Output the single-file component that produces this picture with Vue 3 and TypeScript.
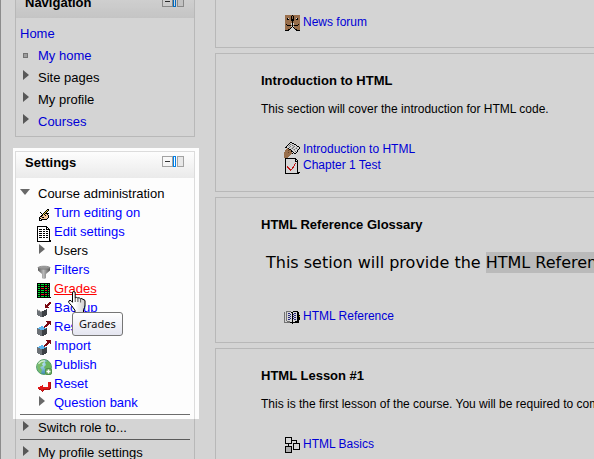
<script setup lang="ts">
import { defineComponent, h } from 'vue'

// One character per pixel; "." is transparent.
const palette: Record<string, string> = {
  k: '#000000', w: '#ffffff', b: '#b5835a', t: '#f3c799', y: '#e8d040', g: '#00e030',
  r: '#e01818', d: '#7c0a12', s: '#888888', l: '#cfcfcf', c: '#5ab4ee', n: '#3d4145',
  m: '#6c7176', a: '#b9b9b9', u: '#303098', o: '#7a5030', e: '#b01010',
}

const bitmaps: Record<string, string[]> = {
  forum: [
    '.bbbbbbbkbbbbbbb',
    '.bbbbbbkbkbbbbbb',
    '.bbbbbbkbkbbbbbb',
    '.bbkwbbkbkbbwkbb',
    '.bbkkbbkkkbbkkbb',
    '.bbbbbbkkkbbbbbb',
    '.bbbbbbbkbbbbbbb',
    '.bbbbbbbkbbbbbbb',
    '.bbbbbbwkwbbbbbb',
    '.bkbbbbwkwbbbbkb',
    '.bbkkkkbkbkkkkbb',
    '.bbbbbbwkwbbbbbb',
    '.bbbbbbk.kbbbbbb',
    '.bbbbbk...kbbbbb',
    '.bbbkk.....kkbbb',
    '.kkkk.......kkkk',
  ],
  page: [
    '......kk........',
    '.....kwwkk......',
    '....kwslwwkk....',
    '...kwswwslwwk...',
    '..kwlwswwlswwkk.',
    '.kkwwswwlswwlwwk',
    '...bkwwlswwlswwk',
    '..bbbkkwwlswwlk.',
    '.bbbobbkwwlwwk..',
    '.bbbbbbkkwwswk..',
    'bbbbobbb.kwwk...',
    'bbbbbbbbk.kk....',
    'bbbbbbb.........',
    'bbbbbb..........',
    'bbbbb...........',
    'bbbb............',
  ],
  quiz: [
    '.kkkkkkkkkkk....',
    '.kwwwwwwwwwkk...',
    '.kwwwwwwwwwkwk..',
    '.kwwwwwwwwwkkk..',
    '.kwwwwwwwwwwwk..',
    '.kwwwwwwwwwrwk..',
    '.kwwwwwwwwrwwk..',
    '.kwwwwwwwwrwwk..',
    '.kwrwwwwwrwwwk..',
    '.kwrrwwwrrwwwk..',
    '.kwwrrwwrwwwwk..',
    '.kwwwrrrwwwwwk..',
    '.kwwwwrwwwwwwk..',
    '.kwwwwwwwwwwwk..',
    '.kwwwwwwwwwwwkkk',
    '.kkkkkkkkkkkkkk.',
  ],
  glossary: [
    '................',
    '................',
    '..sssss..kkkkk..',
    's.swwwwkkwwwwkk.',
    's.swuuwwkwuuwkk.',
    's.swwwuwkuwwwkk.',
    's.swuuwwkwuuwkkk',
    's.swwwuwkuwwwkky',
    's.swuuwwkwuuwkkk',
    's.swwwuwkuwwwkkk',
    's.swuuwwkwuuwkkk',
    's.swwwwwkwwwwkk.',
    's..ssswwkwwkkkk.',
    'sssssskkkkkkkkk.',
    '........k.......',
    '................',
  ],
  lesson: [
    '.kkkkkkk........',
    '.kwwwwwk........',
    '.kwwwwwk........',
    '.kwwwwwkkkkkk...',
    '.kwwwwwk....k...',
    '.kwwwwwk....k...',
    '.kkkkkkk.kkkkkkk',
    '....k....kwwwwwk',
    '....k....kwwwwwk',
    '.kkkkkkk.kwwwwwk',
    '.klllllk.kwwwwwk',
    '.klllllk.kwwwwwk',
    '.klllllk.kkkkkkk',
    '.klllllk........',
    '.klllllk........',
    '.kkkkkkk........',
  ],
  edit: [
    '................',
    '................',
    '...........kk...',
    '..........kyk...',
    '.........kyk....',
    '....k...kyk.....',
    '.....k.kykkkk...',
    '......kykttk....',
    '.....kkttkttk...',
    '....kkttttttk...',
    '...kttkkttttk...',
    '...kkttttttk....',
    '...k.kkkkkk.....',
    '...kkk..........',
    '................',
    '................',
  ],
  document: [
    '.kkkkkkkkkk.....',
    '.kwwwwwwwwkk....',
    '.kwwwwwwwwkwk...',
    '.kwkkkwkkwkkkk..',
    '.kwwwwwwwwwwwk..',
    '.kwkkkwkkwkkwk..',
    '.kwwwwwwwwwwwk..',
    '.kwkkkwkkwkkwk..',
    '.kwwwwwwwwwwwk..',
    '.kwkkkwkkwkkwk..',
    '.kwwwwwwwwwwwk..',
    '.kwkkkwkkwkkwk..',
    '.kwwwwwwwwwwwk..',
    '.kwwwwwwwwwwwk..',
    '.kwwwwwwwwwwwkk.',
    '.kkkkkkkkkkkkkk.',
  ],
  grades: [
    '.kkkkkkkkkkkkk..',
    '.kggkgggkggkgk..',
    '.kkkkkkkkkkkkk..',
    '.kggkgggkrrkgk..',
    '.kkkkkkkkkkkkk..',
    '.kggkrrrkggkrk..',
    '.kkkkkkkkkkkkk..',
    '.kggkgggkrrkgk..',
    '.kkkkkkkkkkkkk..',
    '.kggkgggkggkgk..',
    '.kkkkkkkkkkkkk..',
    '.kggkrrrkrrkgk..',
    '.kkkkkkkkkkkkk..',
    '.kggkgggkggkgk..',
    '.kkkkkkkkkkkkkk.',
    '................',
  ],
  backup: [
    '.............dd.',
    '............ddd.',
    '.........d.ddd..',
    '.........dddd...',
    '.........ddd....',
    '.....ww..dddd...',
    '...wwwwww.......',
    '.awwwwwwwwn.....',
    '.maawwwwnnn.....',
    '.mmmaannnnn.....',
    '.mmmmmnnnnn.....',
    '.mmmmmnnnnn.....',
    '.mmmmmnnnnn.....',
    '..mmmmnnnn......',
    '....mmnn........',
    '................',
  ],
  restore: [
    '..........ddddd.',
    '...........dddd.',
    '...........dddd.',
    '..........ddd.d.',
    '.........ddd....',
    '.....cc.ddd.....',
    '...cccccd.......',
    '.mccccccccn.....',
    '.mmmccccnnn.....',
    '.mmmmmnnnnn.....',
    '.mmmmmnnnnn.....',
    '.mmmmmnnnnn.....',
    '.mmmmmnnnnn.....',
    '..mmmmnnnn......',
    '....mmnn........',
    '................',
  ],
  reset: [
    '................',
    '................',
    '................',
    '................',
    '............rre.',
    '............rre.',
    '............rre.',
    '......r.....rre.',
    '....rrr.....rre.',
    '..rrrrrrrrrrrre.',
    '..rrrrrrrrrrree.',
    '...eerreeeeeee..',
    '.....ere........',
    '......e.........',
    '................',
    '................',
  ],
}

const PixelIcon = defineComponent({
  props: { name: { type: String, required: true } },
  setup(props) {
    return () => {
      const paths: Record<string, string> = {}
      bitmaps[props.name].forEach((row, y) => {
        for (let x = 0; x < row.length; x++) {
          if (row[x] !== '.') paths[row[x]] = (paths[row[x]] ?? '') + `M${x} ${y}h1v1h-1z`
        }
      })
      return h(
        'svg',
        { viewBox: '0 0 16 16', width: 16, height: 16, 'shape-rendering': 'crispEdges', 'aria-hidden': 'true' },
        Object.entries(paths).map(([key, d]) => h('path', { d, fill: palette[key] })),
      )
    }
  },
})

interface Item { label: string; icon: string }
interface Section { title: string; text?: string; large?: boolean; items: Item[] }

const adminItems: Item[] = [
  { label: 'Turn editing on', icon: 'edit' },
  { label: 'Edit settings', icon: 'document' },
  { label: 'Users', icon: 'arrow' },
  { label: 'Filters', icon: 'filter' },
  { label: 'Grades', icon: 'grades' },
  { label: 'Backup', icon: 'backup' },
  { label: 'Restore', icon: 'restore' },
  { label: 'Import', icon: 'restore' },
  { label: 'Publish', icon: 'publish' },
  { label: 'Reset', icon: 'reset' },
  { label: 'Question bank', icon: 'arrow' },
]

const sections: Section[] = [
  {
    title: 'Introduction to HTML',
    text: 'This section will cover the introduction for HTML code.',
    items: [{ label: 'Introduction to HTML', icon: 'page' }, { label: 'Chapter 1 Test', icon: 'quiz' }],
  },
  { title: 'HTML Reference Glossary', large: true, items: [{ label: 'HTML Reference', icon: 'glossary' }] },
  {
    title: 'HTML Lesson #1',
    text: 'This is the first lesson of the course. You will be required to complete',
    items: [{ label: 'HTML Basics', icon: 'lesson' }],
  },
]
</script>

<template>
  <div class="page">
    <aside class="sidebar">
      <nav class="block navigation">
        <header class="block-header">
          <h2>Navigation</h2>
          <div class="block-controls">
            <button class="collapse" type="button" aria-label="Hide Navigation block"></button>
            <button class="dock" type="button" aria-label="Dock Navigation block"></button>
          </div>
        </header>
        <ul class="nav-list">
          <li class="nav-root"><a href="#">Home</a></li>
          <li><i class="bullet"></i><a href="#">My home</a></li>
          <li><i class="arrow"></i><button class="node" type="button">Site pages</button></li>
          <li><i class="arrow"></i><button class="node" type="button">My profile</button></li>
          <li><i class="arrow"></i><a href="#">Courses</a></li>
        </ul>
      </nav>

      <section class="block settings">
        <div class="spotlight">
          <header class="block-header">
            <h2>Settings</h2>
            <div class="block-controls">
              <button class="collapse" type="button" aria-label="Hide Settings block"></button>
              <button class="dock" type="button" aria-label="Dock Settings block"></button>
            </div>
          </header>
          <div class="admin-root"><i class="arrow-down"></i><button class="node" type="button">Course administration</button></div>
          <ul class="admin-list">
            <li v-for="item in adminItems" :key="item.label">
              <span class="icon-cell">
                <i v-if="item.icon === 'arrow'" class="arrow"></i>
                <svg v-else-if="item.icon === 'filter'" viewBox="0 0 16 16" width="16" height="16" aria-hidden="true">
                  <defs>
                    <linearGradient id="funnel"><stop offset="0" stop-color="#555" /><stop offset=".45" stop-color="#bbb" /><stop offset="1" stop-color="#555" /></linearGradient>
                  </defs>
                  <path d="M2 3.500v3L6 10v4l1 .8h2l1-.8v-4l4-3.500v-3z" fill="url(#funnel)" />
                  <ellipse cx="8" cy="3.700" rx="6" ry="1.500" fill="#999" stroke="#777" stroke-width=".7" />
                </svg>
                <svg v-else-if="item.icon === 'publish'" viewBox="0 0 16 16" width="16" height="16" aria-hidden="true">
                  <defs>
                    <radialGradient id="sea" cx=".4" cy=".3" r=".7"><stop offset="0" stop-color="#b9e3ef" /><stop offset="1" stop-color="#3a87b0" /></radialGradient>
                  </defs>
                  <circle cx="8" cy="8" r="7.400" fill="url(#sea)" stroke="#54a060" />
                  <path d="M1.200 6Q3 1.500 7 1.300L8 3 6 5l1 2-3 1 2 3-1 3.500Q1 12 1.200 6z" fill="#79bd69" />
                  <path d="M9 3l3-1q4 4 3 8l-3-1-3 1-1-2 2-2z" fill="#6ab45e" />
                  <path d="M2.500 5Q5 1.500 9 2" fill="none" stroke="#d5eed1" stroke-width="1.200" />
                  <rect x="9.500" y="9.500" width="6" height="6" rx="1.500" fill="#6aaa5e" stroke="#4f914b" />
                  <path d="M12.500 10.500v4M10.500 12.500h4" stroke="#fff" stroke-width="1.400" />
                </svg>
                <PixelIcon v-else :name="item.icon" />
              </span>
              <button v-if="item.icon === 'arrow' && item.label === 'Users'" class="node" type="button">{{ item.label }}</button>
              <span v-else-if="item.label === 'Grades'" class="hovered">
                <a href="#" aria-describedby="grades-tip">{{ item.label }}</a>
                <svg class="pointer" viewBox="0 0 18 22" width="18" height="22" aria-hidden="true">
                  <defs>
                    <linearGradient id="glove"><stop offset=".4" stop-color="#fff" /><stop offset="1" stop-color="#ccc" /></linearGradient>
                  </defs>
                  <path
                    d="M4.500 2q0-1.500 1.300-1.500T7.200 2v5q1.300-1.200 2.600 0 1.500-.8 2.600.7 1.700-.7 2.600.8 1.700-.3 2 1.500v4q0 2.500-1.500 4.500v3H7v-2.200L3.500 14.500.8 11.500Q.3 9.500 2 9.300q1.300.2 2.500 2z"
                    fill="url(#glove)" stroke="#000" stroke-linejoin="round"
                  />
                  <path d="M7.200 7v4M9.900 7.500V11M12.600 8v3.500" fill="none" stroke="#555" />
                </svg>
                <span id="grades-tip" class="tooltip" role="tooltip">Grades</span>
              </span>
              <a v-else href="#">{{ item.label }}</a>
            </li>
          </ul>
        </div>
        <div class="settings-row"><i class="arrow"></i><button class="node" type="button">Switch role to...</button></div>
        <div class="settings-row"><i class="arrow"></i><button class="node" type="button">My profile settings</button></div>
      </section>
    </aside>

    <main class="course">
      <section class="topic general">
        <ul class="activities">
          <li><PixelIcon name="forum" /><a href="#">News forum</a></li>
        </ul>
      </section>
      <section v-for="section in sections" :key="section.title" class="topic">
        <h3>{{ section.title }}</h3>
        <p v-if="section.large" class="summary-large">This setion will provide the <mark>HTML Reference</mark></p>
        <p v-else class="summary">{{ section.text }}</p>
        <ul class="activities">
          <li v-for="item in section.items" :key="item.label"><PixelIcon :name="item.icon" /><a href="#">{{ item.label }}</a></li>
        </ul>
      </section>
    </main>
  </div>
</template>

<style>
body {
  overflow: hidden;
  background: #fdfdfd;
}
</style>

<style scoped>
.page {
  display: flex;
  gap: 20px;
  height: 100vh;
  box-sizing: border-box;
  padding-left: 14px;
  border-left: 1px solid #8c8c8c;
  overflow: hidden;
  color: #000;
  font: 13px/19px "Liberation Sans", Arial, sans-serif;
}
h2, h3, p, ul { margin: 0; padding: 0; }
ul { list-style: none; }
a { color: #0000ff; text-decoration: none; }
button { margin: 0; padding: 0; border: 0; background: none; color: inherit; font: inherit; line-height: inherit; text-align: left; cursor: pointer; }
svg { display: block; flex: none; }

.sidebar { flex: 0 0 180px; margin-top: -9px; }
.block { border: 1px solid #dcdcdc; }
.navigation { margin-bottom: 14px; }
.block-header {
  display: flex;
  justify-content: space-between;
  align-items: flex-start;
  height: 23px;
  padding: 3px 10px 0 9px;
  background: linear-gradient(#fdfdfd, #eaeaea);
}
h2 { font-size: 13px; line-height: 15px; }
.block-controls { display: flex; padding-top: 1px; }
.block-controls button { position: relative; box-sizing: border-box; height: 11px; }
.collapse { width: 11px; border: 1px solid #a2a2a2; }
.collapse::after { content: ""; position: absolute; left: 2px; top: 4px; width: 5px; height: 1px; background: #333; }
.dock { width: 11px; background: linear-gradient(#a2a2a2, #a2a2a2) 4px 0 / 7px 11px no-repeat; }
.dock::before { content: ""; position: absolute; left: 0; top: 0; box-sizing: border-box; width: 3px; height: 11px; border: 1px solid #0080e8; background: #fff; }
.dock::after { content: ""; position: absolute; left: 5px; top: 1px; width: 5px; height: 9px; background: #e8e8e8; }

.nav-list { padding: 4px; }
.nav-list li { display: flex; height: 22px; line-height: 23px; padding-left: 3px; }
.nav-list .nav-root { padding-left: 0; }
.arrow { flex: none; width: 0; height: 0; border-left: 6px solid #696969; border-top: 5px solid transparent; border-bottom: 5px solid transparent; }
.nav-list .arrow { margin: 4px 9px 0 0; }
.bullet { box-sizing: border-box; width: 5px; height: 5px; margin: 9px 10px 0 0; border: 1px solid #888; background: #bbb; }

.spotlight { position: relative; }
.spotlight::after {
  content: "";
  position: absolute;
  z-index: 2;
  inset: -4px -5px -5px -3px;
  box-shadow: 0 0 0 2000px rgba(0, 0, 0, .16);
  pointer-events: none;
}
.admin-root { display: flex; padding: 6px 0 0 4px; }
.arrow-down { width: 0; height: 0; margin: 5px 8px 0 0; border-top: 6px solid #696969; border-left: 5px solid transparent; border-right: 5px solid transparent; }
.admin-list { padding: 0 0 2px 20px; }
.admin-list li { display: flex; gap: 2px; height: 19px; }
.icon-cell { width: 16px; padding-top: 4px; }
.icon-cell .arrow { display: block; margin: -1px 0 0 3px; }
.hovered { position: relative; }
.hovered a { color: #f00; text-decoration: underline; }
.pointer { position: absolute; z-index: 3; left: 14px; top: 12px; }
.tooltip {
  position: absolute;
  z-index: 4;
  left: 18px;
  top: 33px;
  padding: 2px 6px 3px;
  border: 1px solid #767676;
  border-radius: 3px;
  background: linear-gradient(#fff, #e4e5f0);
  color: #111;
  font: 11px/17px "Noto Sans", sans-serif;
}
.settings-row { display: flex; height: 24px; margin: 0 4px; padding-left: 3px; border-top: 1px solid #6c6c6c; line-height: 26px; }
.settings-row .arrow { margin: 6px 9px 0 0; }

.course { flex: 1; min-width: 0; font-size: 12px; }
.topic { margin-bottom: 5px; padding: 18px 0 17px 45px; border: 1px solid #dcdcdc; border-right: 0; white-space: nowrap; overflow: hidden; }
.topic.general { padding-top: 15px; padding-bottom: 16px; border-top: 0; }
h3 { font-size: 13px; line-height: 18px; }
.summary { margin: 11px 0 25px; line-height: 16px; }
.summary-large { margin: 18px 0 36px 5px; font: 16px/21px "DejaVu Sans", Verdana, sans-serif; }
mark { display: inline-block; background: #dedede; color: inherit; }
.activities { padding-left: 23px; }
.activities li { display: flex; gap: 3px; height: 16px; line-height: 14px; }
</style>
